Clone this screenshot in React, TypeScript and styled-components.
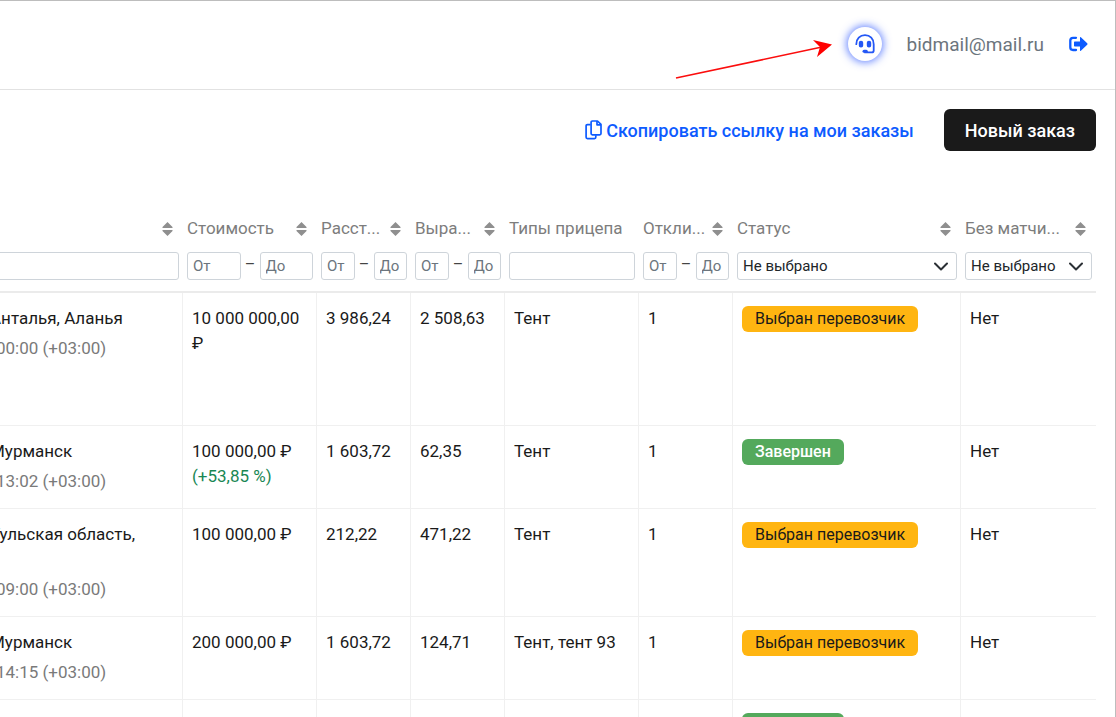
import React from "react";
import styled, { createGlobalStyle } from "styled-components";

const GlobalStyle = createGlobalStyle`
  *, *::before, *::after { box-sizing: border-box; }
  body {
    margin: 0;
    background: #fff;
    color: #1a1a1a;
    font-family: Roboto, "Liberation Sans", sans-serif;
    font-size: 17px;
    line-height: 25px;
  }
  button, input, select { font-family: inherit; }
`;

const Page = styled.div`
  height: 100vh;
  overflow: hidden;
  border-top: 1px solid #bdbdbd;
  border-right: 1px solid #bdbdbd;
`;

const Header = styled.header`
  position: relative;
  display: flex;
  align-items: center;
  justify-content: flex-end;
  gap: 25px;
  padding: 26px 27px 28px;
  border-bottom: 1px solid #e2e2e2;
`;

const PointerArrow = styled.svg`
  position: absolute;
  top: 35px;
  right: 281px;
`;

const SupportButton = styled.button`
  display: flex;
  align-items: center;
  justify-content: center;
  width: 34px;
  height: 34px;
  padding: 0;
  border: 0;
  border-radius: 50%;
  background: #fff;
  color: #2457f5;
  box-shadow: 0 0 8px 1px rgba(36, 80, 255, 0.75);
`;

const Email = styled.span`
  color: #6c757d;
  font-size: 19px;
`;

const LogoutLink = styled.a`
  display: flex;
  color: #0d5bff;
`;

const Toolbar = styled.div`
  display: flex;
  align-items: center;
  justify-content: flex-end;
  gap: 30px;
  padding: 19px 19px 0;
`;

const CopyLink = styled.a`
  display: flex;
  align-items: center;
  gap: 4px;
  color: #0d5bff;
  font-size: 18px;
  font-weight: 500;
  text-decoration: none;
`;

const NewOrderButton = styled.button`
  height: 42px;
  padding: 0 21px;
  border: 0;
  border-radius: 6px;
  background: #1a1a1a;
  color: #fff;
  font-size: 18px;
  font-weight: 500;
`;

const TableArea = styled.main`
  margin-left: -10px;
  padding: 62px 19px 0 0;
`;

const Table = styled.table`
  width: 100%;
  table-layout: fixed;
  border-collapse: separate;
  border-spacing: 0;
`;

const Column = styled.col<{ $width?: number }>`
  width: ${(p) => (p.$width ? `${p.$width}px` : "auto")};
`;

const HeadCell = styled.th`
  padding: 3px 4px 11px;
  border-bottom: 2px solid #ebebeb;
  color: #7d7d7d;
  font-weight: 400;
  text-align: left;
`;

const HeadLabel = styled.div`
  display: flex;
  align-items: center;
  justify-content: space-between;
  height: 25px;
  margin-bottom: 11px;
  padding-right: 6px;
  white-space: nowrap;
`;

const SortButton = styled.button`
  display: flex;
  margin-left: auto;
  padding: 0;
  border: 0;
  background: none;
  color: #8f8f8f;
`;

const Range = styled.div`
  display: grid;
  grid-template-columns: 1fr 19px 1fr;
  color: #444;
  font-size: 16px;
  text-align: center;
`;

const FilterInput = styled.input`
  display: block;
  width: 100%;
  min-width: 0;
  height: 28px;
  padding: 0 5px;
  border: 1px solid #ced4da;
  border-radius: 3px;
  background: #fff;
  color: #212529;
  font-size: 15px;
  &::placeholder { color: #6c757d; opacity: 1; }
`;

const SelectBox = styled.div`
  display: grid;
  grid-template-columns: 1fr 23px;
  align-items: center;
`;

const FilterSelect = styled.select`
  grid-area: 1 / 1 / 2 / 3;
  width: 100%;
  height: 28px;
  padding: 0 24px 0 5px;
  appearance: none;
  border: 1px solid #ced4da;
  border-radius: 3px;
  background: #fff;
  color: #212529;
  font-size: 15px;
`;

const SelectChevron = styled.svg`
  grid-area: 1 / 2;
  z-index: 1;
  pointer-events: none;
`;

const Row = styled.tr<{ $height: number }>`
  height: ${(p) => p.$height}px;
`;

const Cell = styled.td`
  padding: 13px 9px 0;
  border-right: 1px solid #f0f0f0;
  border-bottom: 1px solid #f0f0f0;
  vertical-align: top;
  &:first-child { padding-left: 0; }
  &:last-child { border-right: 0; }
`;

const Place = styled.div<{ $lines: number }>`
  min-height: ${(p) => p.$lines * 25}px;
`;

const Time = styled.div`
  margin-top: 5px;
  padding-left: 6px;
  color: #7a7a7a;
`;

const Gain = styled.div`
  color: #198754;
`;

const Badge = styled.span<{ $done: boolean }>`
  display: inline-block;
  height: 26px;
  padding: 0 13px;
  border-radius: 6px;
  background: ${(p) => (p.$done ? "#54a95c" : "#ffb511")};
  color: ${(p) => (p.$done ? "#fff" : "#1a1a1a")};
  font-size: 16px;
  font-weight: ${(p) => (p.$done ? 500 : 400)};
  line-height: 26px;
  white-space: nowrap;
`;

const HeadsetIcon = () => (
  <svg width="20" height="20" viewBox="0 0 20 20" fill="none" stroke="currentColor" strokeLinecap="round" strokeLinejoin="round" aria-hidden="true">
    <path d="M1.3 10.2C1.3 4.7 4.9 1.2 10 1.2s8.700 3.500 8.700 9v6.200c0 1.300-.8 2-2 2H10" strokeWidth="1.8" />
    <rect x="4.5" y="7.4" width="3" height="5.400" rx="1.4" fill="currentColor" strokeWidth="1.4" />
    <rect x="12.5" y="7.4" width="3" height="5.400" rx="1.4" fill="currentColor" strokeWidth="1.4" />
    <path d="M9 17.3h2.3" strokeWidth="3" />
  </svg>
);

const LogoutIcon = () => (
  <svg width="19" height="16" viewBox="0 0 19 16" aria-hidden="true">
    <path d="M7 1.800H4Q1.300 1.800 1.300 4.500v6.800Q1.300 14 4 14h3" fill="none" stroke="currentColor" strokeWidth="2.3" strokeLinecap="round" />
    <path d="M5.700 5.600H11V1.600q0-1.100.9-.4l6.300 6q.8.8 0 1.600l-6.300 6q-.9.7-.9-.5v-3.900H5.700q-.7 0-.7-.7V6.300q0-.7.7-.7Z" fill="currentColor" />
  </svg>
);

const CopyIcon = () => (
  <svg width="17" height="20" viewBox="0 0 17 20" fill="none" stroke="currentColor" strokeWidth="1.7" strokeLinejoin="round" aria-hidden="true">
    <path d="M7.4 1h5.1L16 4.4v9.1q0 1.3-1.3 1.3H7.4q-1.3 0-1.3-1.3V2.3Q6.1 1 7.4 1Z" />
    <path d="M12 1v3.8h4" />
    <path d="M5.7 4.6H2.4q-1.3 0-1.3 1.3v11.4q0 1.3 1.3 1.3h7.1q1.3 0 1.3-1.3v-2.1" />
  </svg>
);

const SortIcon = () => (
  <svg width="11" height="14" viewBox="0 0 11 14" fill="currentColor" aria-hidden="true">
    <path d="M5.500 0 10.500 5v1H.5V5ZM.5 8h10v1l-5 5-5-5Z" />
  </svg>
);

type Filter = "text" | "range" | "select";
type ColumnInfo = { title: string; name: string; width?: number; sortable: boolean; filter: Filter };

const columns: ColumnInfo[] = [
  { title: "", name: "Маршрут", sortable: true, filter: "text" },
  { title: "Стоимость", name: "Стоимость", width: 134, sortable: true, filter: "range" },
  { title: "Расст...", name: "Расстояние", width: 94, sortable: true, filter: "range" },
  { title: "Выра...", name: "Выработка", width: 94, sortable: true, filter: "range" },
  { title: "Типы прицепа", name: "Типы прицепа", width: 134, sortable: false, filter: "text" },
  { title: "Откли...", name: "Отклики", width: 94, sortable: true, filter: "range" },
  { title: "Статус", name: "Статус", width: 228, sortable: true, filter: "select" },
  { title: "Без матчи...", name: "Без матчинга", width: 135, sortable: true, filter: "select" },
];

type Order = {
  place: string; lines: number; time: string; cost: string; gain?: string;
  distance: string; rate: string; trailer: string; done: boolean; height: number;
};

const orders: Order[] = [
  { place: "Анталья, Аланья", lines: 1, time: "00:00 (+03:00)", cost: "10 000 000,00 ₽", distance: "3 986,24", rate: "2 508,63", trailer: "Тент", done: false, height: 133 },
  { place: "Мурманск", lines: 1, time: "13:02 (+03:00)", cost: "100 000,00 ₽", gain: "(+53,85 %)", distance: "1 603,72", rate: "62,35", trailer: "Тент", done: true, height: 83 },
  { place: "Тульская область,", lines: 2, time: "09:00 (+03:00)", cost: "100 000,00 ₽", distance: "212,22", rate: "471,22", trailer: "Тент", done: false, height: 108 },
  { place: "Мурманск", lines: 1, time: "14:15 (+03:00)", cost: "200 000,00 ₽", distance: "1 603,72", rate: "124,71", trailer: "Тент, тент 93", done: false, height: 83 },
];

function ColumnFilter({ column }: { column: ColumnInfo }) {
  if (column.filter === "range") {
    return (
      <Range>
        <FilterInput placeholder="От" aria-label={`${column.name}: от`} />
        <span>–</span>
        <FilterInput placeholder="До" aria-label={`${column.name}: до`} />
      </Range>
    );
  }
  if (column.filter === "select") {
    return (
      <SelectBox>
        <FilterSelect aria-label={column.name}>
          <option>Не выбрано</option>
        </FilterSelect>
        <SelectChevron width="14" height="9" viewBox="0 0 14 9" fill="none" stroke="#2b3035" strokeWidth="2" strokeLinecap="round" strokeLinejoin="round" aria-hidden="true">
          <path d="m1 1.5 6 6 6-6" />
        </SelectChevron>
      </SelectBox>
    );
  }
  return <FilterInput aria-label={column.name} />;
}

function StatusBadge({ done }: { done: boolean }) {
  return <Badge $done={done}>{done ? "Завершен" : "Выбран перевозчик"}</Badge>;
}

export default function App() {
  return (
    <Page>
      <GlobalStyle />
      <Header>
        <PointerArrow width="160" height="46" viewBox="0 0 160 46" aria-hidden="true">
          <path d="M2 42 148 11" stroke="#fb0d0d" strokeWidth="1.6" />
          <path d="m139 4 19 4.500-15 12.500 3-10Z" fill="#ff0000" />
        </PointerArrow>
        <SupportButton aria-label="Поддержка"><HeadsetIcon /></SupportButton>
        <Email>bidmail@mail.ru</Email>
        <LogoutLink href="#logout" aria-label="Выйти"><LogoutIcon /></LogoutLink>
      </Header>
      <Toolbar>
        <CopyLink href="#copy"><CopyIcon />Скопировать ссылку на мои заказы</CopyLink>
        <NewOrderButton>Новый заказ</NewOrderButton>
      </Toolbar>
      <TableArea>
        <Table>
          <colgroup>
            {columns.map((c) => <Column key={c.name} $width={c.width} />)}
          </colgroup>
          <thead>
            <tr>
              {columns.map((c) => (
                <HeadCell key={c.name} scope="col">
                  <HeadLabel>
                    {c.title}
                    {c.sortable && <SortButton aria-label={`Сортировать: ${c.name}`}><SortIcon /></SortButton>}
                  </HeadLabel>
                  <ColumnFilter column={c} />
                </HeadCell>
              ))}
            </tr>
          </thead>
          <tbody>
            {orders.map((o) => (
              <Row key={o.time} $height={o.height}>
                <Cell>
                  <Place $lines={o.lines}>{o.place}</Place>
                  <Time>{o.time}</Time>
                </Cell>
                <Cell>
                  {o.cost}
                  {o.gain && <Gain>{o.gain}</Gain>}
                </Cell>
                <Cell>{o.distance}</Cell>
                <Cell>{o.rate}</Cell>
                <Cell>{o.trailer}</Cell>
                <Cell>1</Cell>
                <Cell><StatusBadge done={o.done} /></Cell>
                <Cell>Нет</Cell>
              </Row>
            ))}
            <Row $height={83}>
              <Cell /><Cell /><Cell /><Cell /><Cell /><Cell />
              <Cell><StatusBadge done /></Cell>
              <Cell />
            </Row>
          </tbody>
        </Table>
      </TableArea>
    </Page>
  );
}
